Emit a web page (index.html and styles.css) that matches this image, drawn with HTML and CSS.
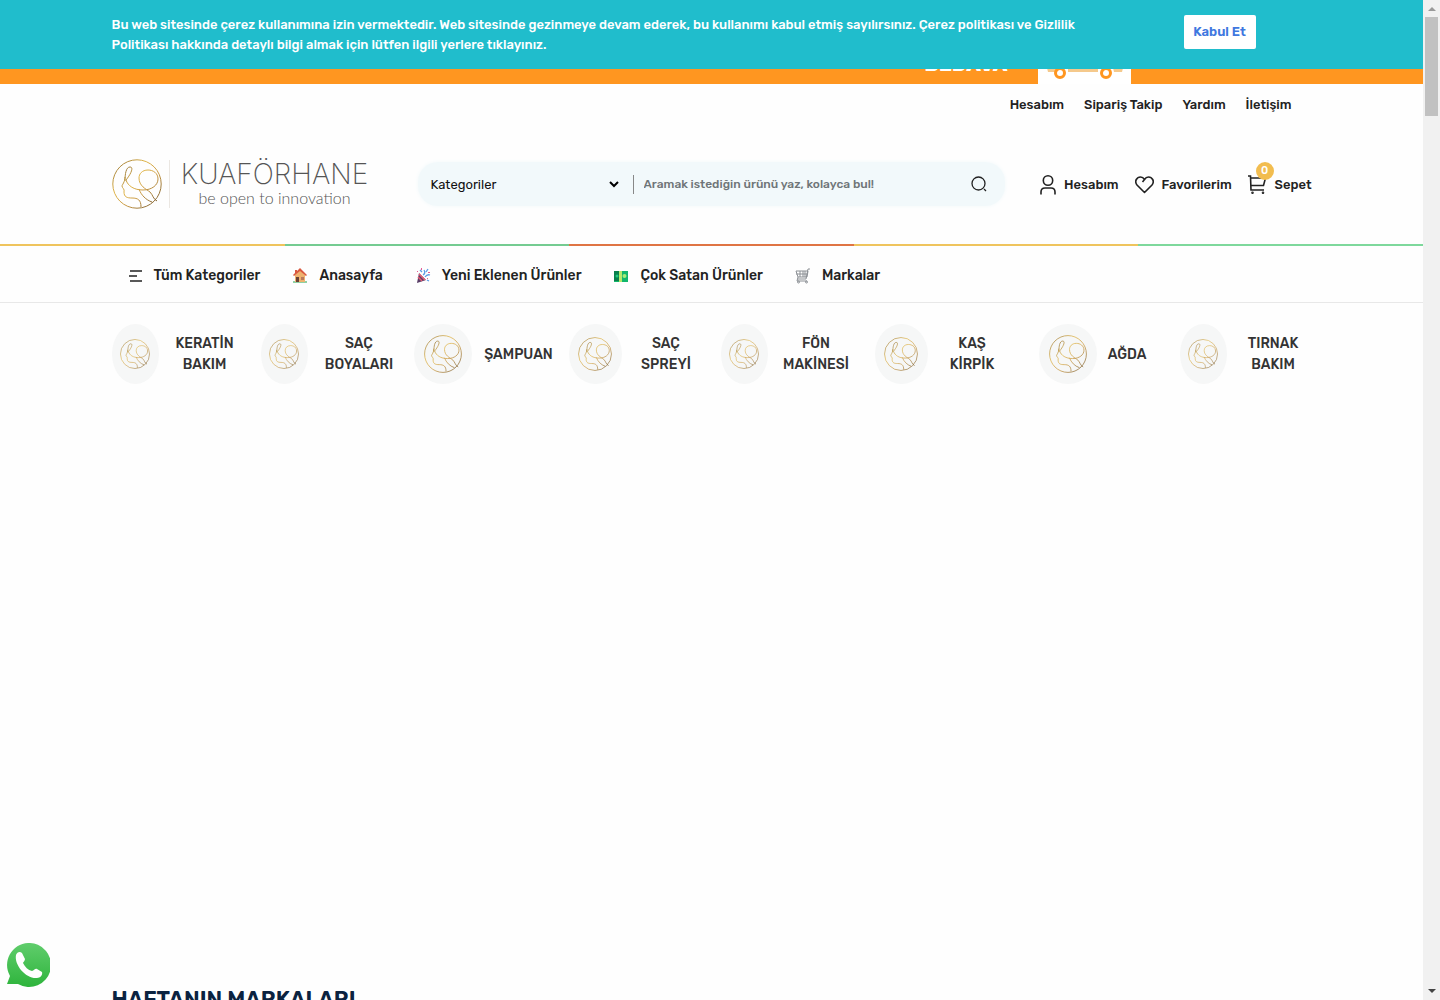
FILE: index.html
```html
<!DOCTYPE html>
<html lang="tr">
<head>
<meta charset="utf-8">
<meta name="viewport" content="width=device-width, initial-scale=1">
<title>Kuaförhane</title>
<link rel="stylesheet" href="styles.css">
</head>
<body>
<svg class="defs" width="0" height="0" aria-hidden="true">
  <defs>
    <linearGradient id="gold" x1="0" y1="0" x2="1" y2="1">
      <stop offset="0" stop-color="#8a6a35"/><stop offset=".35" stop-color="#e0b548"/><stop offset=".6" stop-color="#c99a45"/><stop offset="1" stop-color="#6e5530"/>
    </linearGradient>
    <symbol id="emblem" viewBox="0 0 50 50">
      <g fill="none" stroke="url(#gold)">
        <circle cx="25" cy="25" r="24.2"/>
        <path d="M13 22C13 15 14 8 18 8C22 8 19 15 14 21C16 27 22 31 31 31C40 31 46 26 46 20C46 14 41 11 36 11C30 11 27 15 27 19C27 27 34 30 38 33C41 36 41 40 45 42M27 30C29 36 34 41 40 43M13 18C13 23 10 26 10 27C10 29 13 30 12 33C12 38 15 39 20 39C26 39 29 41 29 48"/>
      </g>
    </symbol>
  </defs>
</svg>
<div class="window">
  <div class="page">
    <div class="promo">
      <div class="container promo-row">
        <strong class="promo-text">BEDAVA</strong>
        <span class="promo-truck">
          <svg width="93" height="20" viewBox="0 0 93 20" aria-hidden="true">
            <path d="M8 0h14v8h-12zM30 0h30v8h-30zM74 0h12l-2 8h-8z" fill="#f5c98c"/>
            <circle cx="22" cy="9" r="4.500" fill="#fff" stroke="#ff9620" stroke-width="3"/>
            <circle cx="68" cy="9" r="4.500" fill="#fff" stroke="#ff9620" stroke-width="3"/>
          </svg>
        </span>
      </div>
    </div>
    <header>
      <nav class="container top-links" aria-label="Üst menü">
        <a href="#">Hesabım</a><a href="#">Sipariş Takip</a><a href="#">Yardım</a><a href="#">İletişim</a>
      </nav>
      <div class="container masthead">
        <a class="logo" href="#">
          <svg class="logo-mark" width="50" height="50"><use href="#emblem"/></svg>
          <span class="logo-words"><span class="logo-name">KUAFÖRHANE</span><span class="logo-tag">be open to innovation</span></span>
        </a>
        <form class="search">
          <div class="select-wrap">
            <select aria-label="Kategoriler"><option>Kategoriler</option></select>
            <svg width="10" height="7" viewBox="0 0 10 7" fill="none" stroke="#000" stroke-width="2" aria-hidden="true"><path d="M1 1l4 4 4-4"/></svg>
          </div>
          <input type="text" aria-label="Arama" placeholder="Aramak istediğin ürünü yaz, kolayca bul!">
          <button type="submit" aria-label="Ara">
            <svg width="16" height="16" viewBox="0 0 16 16" fill="none" stroke="#222" stroke-width="1.300"><circle cx="7.500" cy="7.500" r="6.500"/><path d="M13 13l2 2"/></svg>
          </button>
        </form>
        <nav class="account" aria-label="Hesap">
          <a href="#"><svg width="16" height="20" viewBox="0 0 16 20" fill="none" stroke="#222" stroke-width="1.600"><circle cx="8" cy="5.500" r="4.700"/><path d="M1 19.500v-2.500q0-4 4-4h6q4 0 4 4v2.500"/></svg>Hesabım</a>
          <a href="#"><svg width="19" height="18" viewBox="0 0 19 18" fill="none" stroke="#222" stroke-width="1.600" stroke-linejoin="round"><path d="M9.500 16.500L2 9C-1 5 2 1 5.500 1Q8 1 9.500 3.500Q11 1 13.500 1C17 1 20 5 17 9zM9.500 3.500L7.500 6"/></svg>Favorilerim</a>
          <a class="cart" href="#"><svg width="19" height="19" viewBox="0 0 19 19" fill="none" stroke="#222" stroke-width="1.600"><path d="M0 1h2.500l.5 14h13M2.500 3h15l-2 7.500H3"/><circle cx="4.500" cy="17.700" r=".5" fill="#222"/><circle cx="15" cy="17.700" r=".5" fill="#222"/></svg>Sepet<span class="badge">0</span></a>
        </nav>
      </div>
      <div class="stripes"><i></i><i></i><i></i><i></i><i></i></div>
      <div class="menu">
        <nav class="container menu-row" aria-label="Ana menü">
          <a class="all" href="#"><svg width="13" height="12" viewBox="0 0 13 12" stroke="#222" stroke-width="1.300"><path d="M1 1h12M0 6h8M1 11h12"/></svg>Tüm Kategoriler</a>
          <a href="#"><svg width="16" height="16" viewBox="0 0 16 16"><path d="M1 13h14v2H1z" fill="#8fd0a5"/><path d="M3 7l5-5 5 5v7H3z" fill="#efb26e"/><path d="M8 0l7 7-1 1-6-5-6 5-1-1 2-2V2h2v1z" fill="#d9583f"/><path d="M4 9h3v5H4z" fill="#6a4035"/><path d="M9 9h3v3H9z" fill="#b8795c"/></svg>Anasayfa</a>
          <a href="#"><svg width="16" height="16" viewBox="0 0 16 16"><path d="M4 5l7 7-9 3z" fill="#593e67"/><path d="M3 9l4 4M4 6l6 6" stroke="#e65b74" stroke-width="1.500"/><path d="M8 7q3-2 1-5M10 9q2-3 5-2M7 4L5 2M11 4l2-3M12 12l2 1" stroke="#5b9be4" stroke-width="1.300" fill="none"/><path d="M2 3h1v1H2zM13 4h2v1h-2zM12 10h1v1h-1zM6 0h1v2H6z" fill="#e65b96"/></svg>Yeni Eklenen Ürünler</a>
          <a href="#"><svg width="16" height="16" viewBox="0 0 16 16"><path d="M1 3h14v11H1z" fill="#12b66c"/><path d="M1 3h5v10H1z" fill="#087f4b"/><path d="M6 3h3v11H6z" fill="#b6e96b"/><circle cx="11.500" cy="8" r="2" fill="#a5eb7a"/><circle cx="4" cy="8" r="1.500" fill="#20ca7c"/></svg>Çok Satan Ürünler</a>
          <a href="#"><svg width="16" height="16" viewBox="0 0 16 16" fill="none" stroke="#8c9095"><path d="M15 1h-2l-2 10H3M1 3h12l-1 6H3zM5 3v6M8 3v6M10 3v6M1 6h11M3 9l-1 4h10"/><circle cx="3.500" cy="14" r="1"/><circle cx="11.500" cy="14" r="1"/></svg>Markalar</a>
        </nav>
      </div>
    </header>
    <main>
      <nav class="container categories" aria-label="Kategoriler">
        <a class="small" href="#"><span class="disc"><svg><use href="#emblem"/></svg></span><span class="name">KERATİN<br>BAKIM</span></a>
        <a class="small tight" href="#"><span class="disc"><svg><use href="#emblem"/></svg></span><span class="name">SAÇ<br>BOYALARI</span></a>
        <a class="large tight" href="#"><span class="disc"><svg><use href="#emblem"/></svg></span><span class="name">ŞAMPUAN</span></a>
        <a class="medium" href="#"><span class="disc"><svg><use href="#emblem"/></svg></span><span class="name">SAÇ<br>SPREYİ</span></a>
        <a class="small" href="#"><span class="disc"><svg><use href="#emblem"/></svg></span><span class="name">FÖN<br>MAKİNESİ</span></a>
        <a class="medium spaced" href="#"><span class="disc"><svg><use href="#emblem"/></svg></span><span class="name">KAŞ<br>KİRPİK</span></a>
        <a class="large spaced" href="#"><span class="disc"><svg><use href="#emblem"/></svg></span><span class="name">AĞDA</span></a>
        <a class="small last" href="#"><span class="disc"><svg><use href="#emblem"/></svg></span><span class="name">TIRNAK<br>BAKIM</span></a>
      </nav>
      <section class="hero" aria-label="Kampanyalar"></section>
      <section class="container"><h2>HAFTANIN MARKALARI</h2></section>
    </main>
    <div class="cookie">
      <div class="container cookie-row">
        <p>Bu web sitesinde çerez kullanımına izin vermektedir. Web sitesinde gezinmeye devam ederek, bu kullanımı kabul etmiş sayılırsınız. Çerez politikası ve Gizlilik Politikası hakkında detaylı bilgi almak için lütfen ilgili yerlere tıklayınız.</p>
        <button type="button">Kabul Et</button>
      </div>
    </div>
    <a class="whatsapp" href="#" aria-label="WhatsApp">
      <svg width="44" height="44" viewBox="0 0 44 44"><defs><linearGradient id="wa" x2="0" y2="1"><stop stop-color="#60cd6c"/><stop offset="1" stop-color="#2eb43c"/></linearGradient></defs><path d="M22 0a22 22 0 1 1-10 41L1 41l3-8A22 22 0 0 1 22 0z" fill="url(#wa)"/><path d="M10 12c1-3 4-4 6-2l3 6c0 2-2 3-2 4 2 4 5 7 9 8 2 0 3-3 5-2l5 3c1 3-2 6-5 6C20 36 8 22 10 12z" fill="#fff"/></svg>
    </a>
  </div>
  <div class="scrollbar" aria-hidden="true"><span class="arrow up"></span><span class="thumb"></span><span class="arrow down"></span></div>
</div>
</body>
</html>
```
FILE: styles.css
```css
* { box-sizing: border-box; }
body { margin: 0; background: #fefefe; color: #222; font: 500 13px/20px Rubik, Roboto, sans-serif; }
a { color: inherit; text-decoration: none; }
svg { display: block; flex: none; }
.defs { position: absolute; }
.window { display: grid; grid-template-columns: minmax(0, 1fr) 17px; height: 100vh; overflow: hidden; }
.page { position: relative; overflow: hidden; }
.container { width: 100%; max-width: 1200px; margin: 0 auto; }

.promo { background: #ff9620; }
.promo-row { display: flex; justify-content: flex-end; align-items: flex-end; gap: 30px; height: 84px; padding-right: 181px; }
.promo-text { color: #fff; font-size: 20px; line-height: 28px; font-weight: 800; padding-bottom: 6px; }
.promo-truck { display: flex; align-items: flex-end; height: 84px; background: #fff; }

.top-links { display: flex; justify-content: flex-end; gap: 20px; padding: 11px 20px 9px; }
.masthead { display: flex; align-items: center; height: 120px; }
.logo { display: flex; align-items: center; width: 258px; margin-right: 48px; }
.logo-words { display: flex; flex-direction: column; align-items: center; flex: 1; margin-left: 7px; padding-left: 10px; border-left: 1px solid #ebe7e2; color: #555; white-space: nowrap; }
.logo-name { font: 200 28px/28px Inter, sans-serif; }
.logo-tag { font: 300 16px/20px Lato, sans-serif; }
.search { display: flex; align-items: center; flex: 1; height: 44px; margin-right: 35px; padding: 0 16px 0 13px; background: #f2f9fb; border-radius: 20px; box-shadow: 0 0 4px #f2f9fb; }
.select-wrap { display: flex; align-items: center; width: 203px; height: 19px; padding-right: 14px; border-right: 1px solid #888; }
select { flex: 1; appearance: none; border: 0; padding: 0; background: none; color: #111; font: 400 13px/19px Rubik, Roboto, sans-serif; }
.search input { flex: 1; min-width: 0; border: 0; padding: 0 0 0 10px; background: none; font: 500 12px/20px Rubik, Roboto, sans-serif; outline: 0; }
.search input::placeholder { color: #6f7578; opacity: 1; }
.search button { border: 0; padding: 2px; background: none; }
.account { display: flex; gap: 16px; padding-top: 1px; }
.account a { display: flex; align-items: center; gap: 8px; }
.cart { position: relative; }
.badge { position: absolute; left: 8px; top: -13px; width: 18px; height: 18px; border-radius: 50%; background: #f2bd4f; color: #fff; font-size: 11px; line-height: 18px; text-align: center; }

.stripes { display: grid; grid-template-columns: repeat(5, 1fr); height: 2px; }
.stripes i { background: #efc45d; }
.stripes i:nth-child(2) { background: #74cb91; }
.stripes i:nth-child(3) { background: #df7444; }
.stripes i:nth-child(5) { background: #7ed89c; }
.menu { border-bottom: 1px solid #e8e8e8; }
.menu-row { display: flex; align-items: center; gap: 32px; height: 56px; padding: 3px 17px 0; font-size: 14px; }
.menu-row a { display: flex; align-items: center; gap: 11px; }
.menu-row .all { gap: 12px; }

.categories { display: grid; grid-template-columns: 149fr 153fr 155fr 152fr 154fr 164fr 141fr 132fr; padding: 21px 0 10px; font-size: 14px; line-height: 21px; color: #333; }
.categories a { display: flex; align-items: center; padding-right: 10px; }
.categories .tight { padding-right: 3px; }
.categories .spaced { padding-right: 22px; }
.categories .last { padding-right: 0; margin-right: -8px; }
.disc { display: flex; align-items: center; justify-content: center; flex: none; height: 60px; border-radius: 50%; background: #f6f7f7; }
.small .disc { width: 47px; }
.medium .disc { width: 53px; }
.large .disc { width: 58px; }
.small svg { width: 30px; height: 30px; }
.medium svg { width: 34px; height: 34px; }
.large svg { width: 38px; height: 38px; }
.name { flex: 1; text-align: center; }
.hero { height: 592px; }
h2 { margin: 0; color: #0b2340; font-size: 22px; line-height: 28px; font-weight: 600; }

.cookie { position: absolute; inset: 0 0 auto; background: #20bdcc; }
.cookie-row { display: flex; justify-content: space-between; align-items: flex-start; padding: 15px 56px 14px 0; }
.cookie p { max-width: 980px; margin: 0; color: #fff; font-weight: 500; line-height: 20px; }
.cookie button { width: 72px; height: 34px; border: 0; border-radius: 2px; padding: 0; background: #fff; color: #3f78e0; font: 600 13px/20px Rubik, Roboto, sans-serif; }
.whatsapp { position: absolute; left: 6px; bottom: 13px; }
.scrollbar { display: flex; flex-direction: column; align-items: center; background: #f1f1f1; }
.arrow { width: 0; height: 0; border: 4px solid transparent; }
.up { margin-top: 3px; border-bottom-color: #999; }
.down { margin: auto 0 3px; border-top-color: #444; }
.thumb { width: 13px; height: 99px; margin-top: 6px; background: #c1c1c1; }
```
